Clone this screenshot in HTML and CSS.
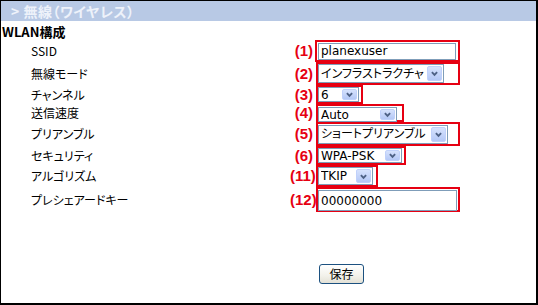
FILE: index.html
```html
<!DOCTYPE html>
<html lang="ja">
<head>
<meta charset="utf-8">
<title>無線(ワイヤレス)</title>
<link rel="stylesheet" href="styles.css">
</head>
<body>
<div class="panel">
  <div class="hdr">&gt; 無線（ワイヤレス）</div>
  <div class="sec">WLAN構成</div>
  <div class="form">
    <div class="row r1">
      <span class="lbl">SSID</span><span class="num">(1)</span>
      <span class="mark m1"><input class="txt t1" type="text" value="planexuser"></span>
    </div>
    <div class="row r2">
      <span class="lbl">無線モード</span><span class="num">(2)</span>
      <span class="mark m2"><span class="sel s2"><select><option>インフラストラクチャ</option></select><span class="arrow"><svg viewBox="0 0 15 15"><path d="M4.5 6 L7.5 9 L10.5 6"/></svg></span></span></span>
    </div>
    <div class="row r3">
      <span class="lbl">チャンネル</span><span class="num">(3)</span>
      <span class="mark m3"><span class="sel s3"><select><option>6</option></select><span class="arrow"><svg viewBox="0 0 15 15"><path d="M4.5 6 L7.5 9 L10.5 6"/></svg></span></span></span>
    </div>
    <div class="row r4">
      <span class="lbl">送信速度</span><span class="num">(4)</span>
      <span class="mark m4"><span class="sel s4"><select><option>Auto</option></select><span class="arrow"><svg viewBox="0 0 15 15"><path d="M4.5 6 L7.5 9 L10.5 6"/></svg></span></span></span>
    </div>
    <div class="row r5">
      <span class="lbl">プリアンブル</span><span class="num">(5)</span>
      <span class="mark m5"><span class="sel s5"><select><option>ショートプリアンブル</option></select><span class="arrow"><svg viewBox="0 0 15 15"><path d="M4.5 6 L7.5 9 L10.5 6"/></svg></span></span></span>
    </div>
    <div class="row r6">
      <span class="lbl">セキュリティ</span><span class="num">(6)</span>
      <span class="mark m6"><span class="sel s6"><select><option>WPA-PSK</option></select><span class="arrow"><svg viewBox="0 0 15 15"><path d="M4.5 6 L7.5 9 L10.5 6"/></svg></span></span></span>
    </div>
    <div class="row r7">
      <span class="lbl">アルゴリズム</span><span class="num">(11)</span>
      <span class="mark m7"><span class="sel s7"><select><option>TKIP</option></select><span class="arrow"><svg viewBox="0 0 15 15"><path d="M4.5 6 L7.5 9 L10.5 6"/></svg></span></span></span>
    </div>
    <div class="row r8">
      <span class="lbl">プレシェアードキー</span><span class="num">(12)</span>
      <span class="mark m8"><input class="txt t8" type="text" value="00000000"></span>
    </div>
  </div>
  <div class="actions"><button class="btn" type="button">保存</button></div>
</div>
</body>
</html>
```

FILE: styles.css
```css
* { box-sizing: border-box; }
html, body { margin: 0; padding: 0; background: #fff; }
body {
  font-family: "Noto Sans CJK JP", "DejaVu Sans", sans-serif;
  font-size: 12px;
  color: #000;
  font-feature-settings: "palt";
}
.panel {
  width: 538px;
  height: 305px;
  border: 1px solid #000;
  border-right-width: 2px;
  border-bottom-width: 2px;
}
.hdr {
  height: 20px;
  line-height: 20px;
  background: #b8c9e5;
  color: #eef2fa;
  font-weight: bold;
  font-size: 14px;
  padding-left: 10px;
  letter-spacing: 0.5px;
}
.sec {
  height: 19px;
  line-height: 21px;
  padding-left: 1px;
  font-weight: bold;
  font-size: 13px;
}
.row {
  display: flex;
  align-items: center;
}
.r1 { height: 22px; }
.r2 { height: 23px; }
.r3 { height: 19px; }
.r4 { height: 18px; }
.r5 { height: 24px; }
.r6 { height: 19px; }
.r7 { height: 22px; }
.r8 { height: 25px; }
.lbl {
  width: 289px;
  padding-left: 30px;
  line-height: 16px;
}
.num {
  width: 24px;
  padding-right: 1px;
  text-align: right;
  color: #e60012;
  font-family: "Liberation Sans", Arial, sans-serif;
  font-weight: bold;
  font-size: 15px;
  line-height: 16px;
}
.mark {
  display: flex;
  align-items: center;
  height: 100%;
  margin-left: 2px;
  border: 2px solid #e60012;
}
.m1 { width: 145px; margin-left: 1px; padding-left: 1px; }
.m2 { width: 144px; }
.m3 { width: 47px; }
.m4 { width: 88px; }
.m5 { width: 144px; }
.m6 { width: 90px; }
.m7 { width: 62px; }
.m8 { width: 144px; }
.txt {
  margin: 0;
  border: 1px solid #7f9db9;
  padding: 0 2px;
  font-family: "DejaVu Sans", "Noto Sans CJK JP", sans-serif;
  font-size: 12px;
  color: #000;
  background: #fff;
  outline: none;
}
.t1 { width: 138px; height: 17px; }
.t8 { width: 139px; height: 21px; margin-top: 2px; }
.sel {
  display: flex;
  align-items: center;
  height: 100%;
  border: 1px solid #7f9db9;
  background: #fff;
}
.s2 { width: 126px; height: 19px; }
.s3 { width: 41px; }
.s4 { width: 79px; height: 15px; margin-top: 2px; }
.s5 { width: 130px; height: 19px; }
.s6 { width: 84px; }
.s7 { width: 55px; height: 18px; }
.sel select {
  flex: 1;
  min-width: 0;
  height: 100%;
  margin: 0;
  border: 0;
  padding: 0 0 0 2px;
  background: transparent;
  appearance: none;
  -webkit-appearance: none;
  font-family: "DejaVu Sans", "Noto Sans CJK JP", sans-serif;
  font-feature-settings: "palt";
  font-size: 12px;
  color: #000;
  outline: none;
}
.arrow {
  flex: none;
  width: 15px;
  height: calc(100% - 2px);
  max-height: 15px;
  margin-right: 1px;
  border: 1px solid #c0d1fb;
  border-radius: 2px;
  background: linear-gradient(#d6e2fd, #b4c8f6);
  display: flex;
  align-items: center;
  justify-content: center;
}
.arrow svg {
  width: 13px;
  height: 13px;
  fill: none;
  stroke: #4d6185;
  stroke-width: 2.2;
}
.actions {
  padding: 52px 0 0 318px;
}
.btn {
  width: 45px;
  height: 20px;
  padding: 0;
  margin: 0;
  border: 1px solid #1c5180;
  border-radius: 3px;
  background: linear-gradient(#ffffff, #f2f1ea 60%, #e3e1d6);
  font-family: "Noto Sans CJK JP", sans-serif;
  font-size: 12px;
  line-height: 18px;
  color: #000;
}
```
